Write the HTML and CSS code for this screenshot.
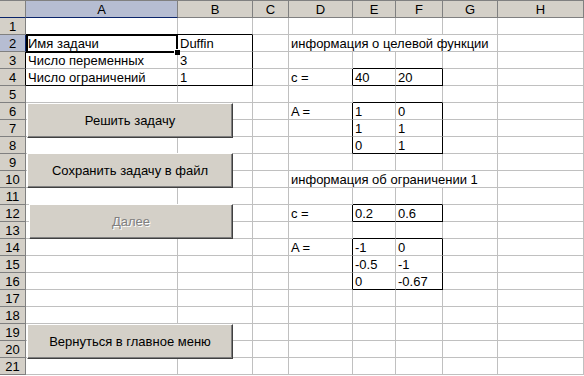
FILE: index.html
```html
<!DOCTYPE html>
<html lang="ru">

<head>
    <meta charset="UTF-8">
    <title>Задача</title>
    <link rel="stylesheet" href="styles.css">
</head>

<body>
    <div class="sheet">
        <!-- column headers -->
        <div class="ch corner"></div>
        <div class="ch sel">A</div>
        <div class="ch">B</div>
        <div class="ch">C</div>
        <div class="ch">D</div>
        <div class="ch">E</div>
        <div class="ch">F</div>
        <div class="ch">G</div>
        <div class="ch">H</div>

        <!-- 1 -->
        <div class="rh">1</div>
        <div class="c t"></div><div class="c t"></div><div class="c"></div><div class="c"></div>
        <div class="c"></div><div class="c"></div><div class="c"></div><div class="c"></div>

        <!-- 2 -->
        <div class="rh sel">2</div>
        <div class="c active">Имя задачи</div>
        <div class="c r">Duffin</div>
        <div class="c"></div>
        <div class="c span4">информация о целевой функции</div>
        <div class="c"></div>

        <!-- 3 -->
        <div class="rh l">3</div>
        <div class="c">Число переменных</div>
        <div class="c r">3</div>
        <div class="c"></div><div class="c"></div>
        <div class="c t"></div><div class="c t"></div>
        <div class="c"></div><div class="c"></div>

        <!-- 4 -->
        <div class="rh l">4</div>
        <div class="c b">Число ограничений</div>
        <div class="c b r">1</div>
        <div class="c"></div>
        <div class="c l">c =</div>
        <div class="c b">40</div>
        <div class="c b r">20</div>
        <div class="c"></div><div class="c"></div>

        <!-- 5 -->
        <div class="rh">5</div>
        <div class="c"></div><div class="c"></div><div class="c"></div><div class="c"></div>
        <div class="c t"></div><div class="c t"></div><div class="c"></div><div class="c"></div>

        <!-- 6 -->
        <div class="rh">6</div>
        <div class="c"></div><div class="c"></div><div class="c"></div>
        <div class="c l">A =</div>
        <div class="c">1</div>
        <div class="c r">0</div>
        <div class="c"></div><div class="c"></div>

        <!-- 7 -->
        <div class="rh">7</div>
        <div class="c"></div><div class="c"></div><div class="c"></div>
        <div class="c l"></div>
        <div class="c">1</div>
        <div class="c r">1</div>
        <div class="c"></div><div class="c"></div>

        <!-- 8 -->
        <div class="rh">8</div>
        <div class="c"></div><div class="c"></div><div class="c"></div>
        <div class="c l"></div>
        <div class="c b">0</div>
        <div class="c b r">1</div>
        <div class="c"></div><div class="c"></div>

        <!-- 9 -->
        <div class="rh">9</div>
        <div class="c"></div><div class="c"></div><div class="c"></div><div class="c"></div>
        <div class="c"></div><div class="c"></div><div class="c"></div><div class="c"></div>

        <!-- 10 -->
        <div class="rh">10</div>
        <div class="c"></div><div class="c"></div><div class="c"></div>
        <div class="c span4">информация об ограничении 1</div>
        <div class="c"></div>

        <!-- 11 -->
        <div class="rh">11</div>
        <div class="c"></div><div class="c"></div><div class="c"></div><div class="c"></div>
        <div class="c t"></div><div class="c t"></div><div class="c"></div><div class="c"></div>

        <!-- 12 -->
        <div class="rh">12</div>
        <div class="c"></div><div class="c"></div><div class="c"></div>
        <div class="c l">c =</div>
        <div class="c b">0.2</div>
        <div class="c b r">0.6</div>
        <div class="c"></div><div class="c"></div>

        <!-- 13 -->
        <div class="rh">13</div>
        <div class="c"></div><div class="c"></div><div class="c"></div><div class="c"></div>
        <div class="c t"></div><div class="c t"></div><div class="c"></div><div class="c"></div>

        <!-- 14 -->
        <div class="rh">14</div>
        <div class="c"></div><div class="c"></div><div class="c"></div>
        <div class="c l">A =</div>
        <div class="c">-1</div>
        <div class="c r">0</div>
        <div class="c"></div><div class="c"></div>

        <!-- 15 -->
        <div class="rh">15</div>
        <div class="c"></div><div class="c"></div><div class="c"></div>
        <div class="c l"></div>
        <div class="c">-0.5</div>
        <div class="c r">-1</div>
        <div class="c"></div><div class="c"></div>

        <!-- 16 -->
        <div class="rh">16</div>
        <div class="c"></div><div class="c"></div><div class="c"></div>
        <div class="c l"></div>
        <div class="c b">0</div>
        <div class="c b r">-0.67</div>
        <div class="c"></div><div class="c"></div>

        <!-- 17 - 21 -->
        <div class="rh">17</div>
        <div class="c"></div><div class="c"></div><div class="c"></div><div class="c"></div>
        <div class="c"></div><div class="c"></div><div class="c"></div><div class="c"></div>
        <div class="rh">18</div>
        <div class="c"></div><div class="c"></div><div class="c"></div><div class="c"></div>
        <div class="c"></div><div class="c"></div><div class="c"></div><div class="c"></div>
        <div class="rh">19</div>
        <div class="c"></div><div class="c"></div><div class="c"></div><div class="c"></div>
        <div class="c"></div><div class="c"></div><div class="c"></div><div class="c"></div>
        <div class="rh">20</div>
        <div class="c"></div><div class="c"></div><div class="c"></div><div class="c"></div>
        <div class="c"></div><div class="c"></div><div class="c"></div><div class="c"></div>
        <div class="rh">21</div>
        <div class="c"></div><div class="c"></div><div class="c"></div><div class="c"></div>
        <div class="c"></div><div class="c"></div><div class="c"></div><div class="c"></div>

        <!-- floating form buttons -->
        <button type="button" class="xl-btn btn-solve">Решить задачу</button>
        <button type="button" class="xl-btn btn-save">Сохранить задачу в файл</button>
        <button type="button" class="xl-btn btn-next" disabled>Далее</button>
        <button type="button" class="xl-btn btn-back">Вернуться в главное меню</button>
    </div>
</body>

</html>
```

FILE: styles.css
```css
body {
    margin: 0;
    background: #fff;
    font-family: "Liberation Sans", Arial, sans-serif;
    font-size: 13px;
    color: #000;
}

.sheet {
    position: relative;
    display: grid;
    grid-template-columns: 26px 152px 75px 36px 64px 43px 47px 55px 1fr;
    grid-template-rows: 18px repeat(21, 17px) 1fr;
    width: 584px;
    height: 376px;
    overflow: hidden;
}

.c,
.ch,
.rh {
    box-sizing: border-box;
    white-space: nowrap;
    overflow: visible;
    line-height: 16px;
}

.c {
    padding: 1px 2px 0;
    border-right: 1px solid #c0c0c0;
    border-bottom: 1px solid #c0c0c0;
}

.span4 {
    grid-column: span 4;
}

/* headers */
.ch {
    background: #d4d0c8;
    text-align: center;
    padding-top: 1px;
    border-top: 1px solid #808080;
    border-right: 1px solid #808080;
    border-bottom: 1px solid #808080;
}

.rh {
    background: #d4d0c8;
    text-align: center;
    padding-top: 1px;
    border-right: 1px solid #808080;
    border-bottom: 1px solid #808080;
}

.ch.sel {
    background: #b6bdd2;
    border-bottom-color: #0a246a;
}

.rh.sel {
    background: #b6bdd2;
    border-right-color: #0a246a;
}

.corner {
    border-bottom-color: #0a246a;
}

/* black range borders */
.t {
    border-bottom-color: #000;
}

.b {
    border-bottom-color: #000;
}

.r,
.l {
    border-right-color: #000;
}

/* active cell A2 */
.active {
    position: relative;
}

.active::after {
    content: "";
    position: absolute;
    left: 0;
    top: -1px;
    right: -1px;
    bottom: -2px;
    border: 2px solid #000;
}

.active::before {
    content: "";
    position: absolute;
    right: -3px;
    bottom: -4px;
    width: 5px;
    height: 5px;
    background: #000;
    border-left: 1px solid #fff;
    border-top: 1px solid #fff;
    z-index: 1;
}

/* form buttons lying over the sheet */
.xl-btn {
    position: absolute;
    box-sizing: border-box;
    margin: 0;
    padding: 0;
    background: #d4d0c8;
    border: 1px solid;
    border-color: #fff #404040 #404040 #fff;
    box-shadow: inset -1px -1px 0 #808080;
    font-family: "Liberation Sans", Arial, sans-serif;
    font-size: 13px;
    color: #000;
    text-align: center;
}

.btn-solve {
    left: 27px;
    top: 103px;
    width: 206px;
    height: 35px;
}

.btn-save {
    left: 27px;
    top: 153px;
    width: 206px;
    height: 35px;
}

.btn-next {
    left: 29px;
    top: 204px;
    width: 204px;
    height: 35px;
    color: #808080;
    text-shadow: 1px 1px 0 #fff;
}

.btn-back {
    left: 27px;
    top: 324px;
    width: 206px;
    height: 35px;
}
```
